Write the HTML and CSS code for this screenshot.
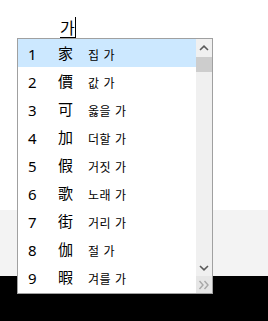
FILE: index.html
```html
<!DOCTYPE html>
<html lang="ko">
<head>
  <meta charset="UTF-8" />
  <meta name="viewport" content="width=device-width, initial-scale=1.0"/>
  <title>한자 변환</title>
  <link rel="stylesheet" href="styles.css">
</head>
<body>
  <div class="editor">
    <div class="compose">
      <span class="comp-text">가</span><span class="caret"></span>
    </div>
  </div>
  <div class="band"></div>
  <div class="taskbar"></div>

  <div class="candidates">
    <div class="list">
      <div class="row selected"><span class="num">1</span><span class="hanja">家</span><span class="mean">집 가</span></div>
      <div class="row"><span class="num">2</span><span class="hanja">價</span><span class="mean">값 가</span></div>
      <div class="row"><span class="num">3</span><span class="hanja">可</span><span class="mean">옳을 가</span></div>
      <div class="row"><span class="num">4</span><span class="hanja">加</span><span class="mean">더할 가</span></div>
      <div class="row"><span class="num">5</span><span class="hanja">假</span><span class="mean">거짓 가</span></div>
      <div class="row"><span class="num">6</span><span class="hanja">歌</span><span class="mean">노래 가</span></div>
      <div class="row"><span class="num">7</span><span class="hanja">街</span><span class="mean">거리 가</span></div>
      <div class="row"><span class="num">8</span><span class="hanja">伽</span><span class="mean">절 가</span></div>
      <div class="row"><span class="num">9</span><span class="hanja">暇</span><span class="mean">겨를 가</span></div>
    </div>
    <div class="scroll">
      <div class="btn up">
        <svg width="10" height="6" viewBox="0 0 10 6"><polyline points="1,5 5,1.2 9,5" fill="none" stroke="#5a5a5a" stroke-width="1.6"/></svg>
      </div>
      <div class="thumb"></div>
      <div class="track"></div>
      <div class="btn down">
        <svg width="10" height="6" viewBox="0 0 10 6"><polyline points="1,1 5,4.8 9,1" fill="none" stroke="#5a5a5a" stroke-width="1.6"/></svg>
      </div>
      <div class="btn more">
        <svg width="12" height="10" viewBox="0 0 12 10"><polyline points="1.5,1 5,5 1.5,9" fill="none" stroke="#a8a8a8" stroke-width="1.4"/><polyline points="6.5,1 10,5 6.5,9" fill="none" stroke="#a8a8a8" stroke-width="1.4"/></svg>
      </div>
    </div>
  </div>
</body>
</html>
```

FILE: styles.css
```css
body {
  margin: 0;
  font-family: "Noto Sans", "Noto Sans CJK KR", sans-serif;
  background: #fff;
  color: #000;
}
.editor {
  height: 210px;
  background: #fff;
}
.compose {
  display: flex;
  align-items: flex-end;
  padding-top: 17px;
  padding-left: 60px;
}
.comp-text {
  font-family: "Noto Sans CJK KR", sans-serif;
  font-size: 16px;
  line-height: 20px;
  height: 20px;
  border-bottom: 1px solid #000;
}
.caret {
  width: 1px;
  height: 21px;
  background: #000;
}
.band {
  height: 66px;
  background: #f3f3f3;
}
.taskbar {
  height: 45px;
  background: #000;
}
.candidates {
  position: absolute;
  top: 38px;
  left: 17px;
  width: 196px;
  height: 256px;
  box-sizing: border-box;
  border: 1px solid #a0a0a0;
  background: #fff;
  display: flex;
}
.list {
  width: 178px;
}
.row {
  height: 28px;
  display: flex;
  align-items: center;
  padding-left: 10px;
}
.row.selected {
  background: #cce8ff;
}
.num {
  width: 30px;
  font-size: 15px;
  position: relative;
  top: 1px;
}
.hanja {
  width: 30px;
  font-family: "Noto Sans CJK KR", sans-serif;
  font-size: 15px;
  position: relative;
  top: -1px;
}
.mean {
  font-family: "Noto Sans CJK KR", sans-serif;
  font-size: 12px;
  letter-spacing: 0.5px;
  position: relative;
  top: 1px;
}
.scroll {
  width: 16px;
  display: flex;
  flex-direction: column;
  background: #f0f0f0;
}
.btn {
  display: flex;
  align-items: center;
  justify-content: center;
}
.up {
  height: 18px;
}
.thumb {
  height: 15px;
  background: #cdcdcd;
}
.track {
  flex: 1;
}
.down {
  height: 17px;
}
.more {
  height: 17px;
  background: #e6e6e6;
}
```
